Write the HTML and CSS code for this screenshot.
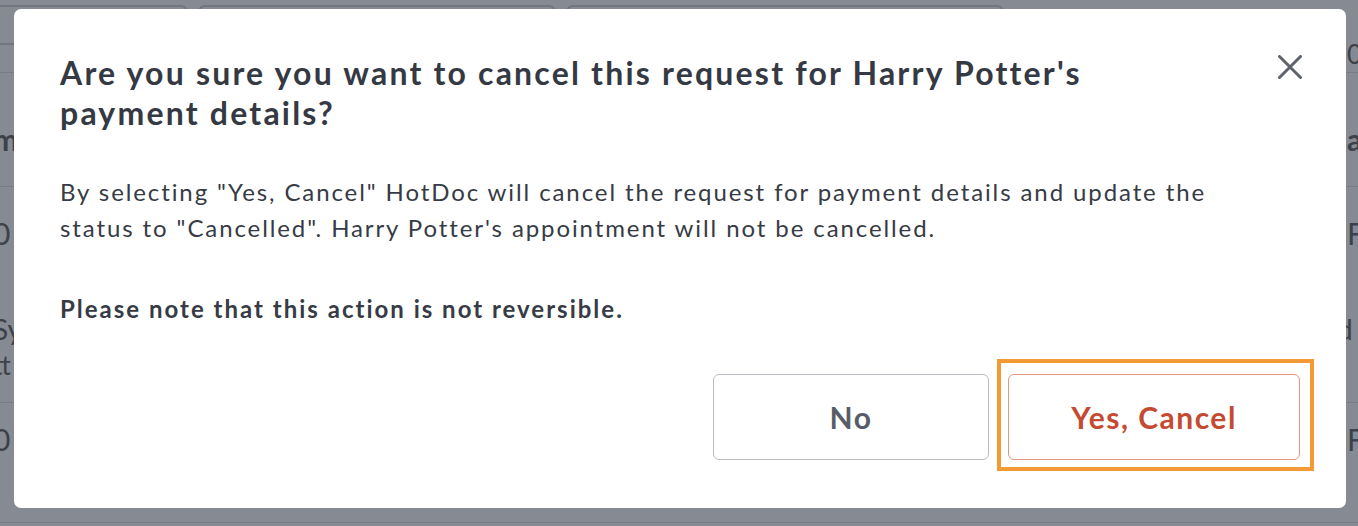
FILE: index.html
```html
<!DOCTYPE html>
<html lang="en">
<head>
<meta charset="utf-8">
<title>Cancel payment details request</title>
<link rel="stylesheet" href="styles.css">
</head>
<body>
<div class="page">
  <div class="filters">
    <div class="filter f1"></div>
    <div class="filter f2"></div>
    <div class="filter f3"></div>
    <span class="edge-r top-o">0</span>
  </div>
  <div class="row head">
    <span class="cell-l">m</span>
    <span class="cell-r">a</span>
  </div>
  <div class="row r1">
    <span class="cell-l">0</span>
    <span class="cell-r">F</span>
    <span class="cell-l sub">Sy</span>
    <span class="cell-r sub">d</span>
    <span class="cell-l small">tt</span>
  </div>
  <div class="row r2">
    <span class="cell-l">0</span>
    <span class="cell-r">F</span>
  </div>
</div>

<div class="modal" role="dialog" aria-modal="true">
  <div class="modal-head">
    <h2 class="modal-title">Are you sure you want to cancel this request for Harry Potter's payment details?</h2>
    <button class="close" aria-label="Close">
      <svg width="24" height="24" viewBox="0 0 24 24"><path d="M1.5 1.5 L22.5 22.5 M22.5 1.5 L1.5 22.5" stroke="#5d626c" stroke-width="3" stroke-linecap="round" fill="none"/></svg>
    </button>
  </div>
  <p class="modal-text">By selecting "Yes, Cancel" HotDoc will cancel the request for payment details and update the status to "Cancelled". Harry Potter's appointment will not be cancelled.</p>
  <p class="modal-note">Please note that this action is not reversible.</p>
  <div class="actions">
    <button class="btn btn-no">No</button>
    <button class="btn btn-yes">Yes, Cancel</button>
  </div>
</div>
</body>
</html>
```

FILE: styles.css
```css
* { box-sizing: border-box; }

html, body {
  margin: 0;
  padding: 0;
  height: 100%;
}

body {
  background: #868a92;
  font-family: Lato, "Noto Sans", sans-serif;
  color: #373c46;
  overflow: hidden;
}

.page {
  width: 1358px;
  height: 526px;
  position: relative;
  overflow: hidden;
}

.filters {
  height: 73px;
  display: flex;
  gap: 10px;
  padding-top: 5px;
  border-bottom: 1px solid #787c84;
  position: relative;
}

.filter {
  height: 40px;
  border: 2px solid #72767e;
  border-radius: 7px;
}
.f1 { width: 196px; margin-left: -8px; }
.f2 { width: 358px; }
.f3 { width: 438px; }

.row {
  display: grid;
  grid-template-columns: 1347px 1fr;
  border-bottom: 1px solid #787c84;
  color: #3d414a;
  font-size: 30px;
}
.head { height: 114px; padding-top: 48px; font-weight: 700; }
.r1 { height: 216px; padding-top: 28px; row-gap: 60px; }
.r2 { height: 120px; padding-top: 18px; }

.cell-l { margin-left: -7px; line-height: 36px; }
.cell-r { line-height: 36px; white-space: nowrap; }
.sub { font-size: 28px; }
.cell-r.sub { margin-left: -10px; }
.small { font-size: 26px; margin-top: -60px; grid-column: 1; }

.edge-r {
  position: absolute;
  left: 1347px;
  top: 38px;
  font-size: 26px;
  color: #3d414a;
}

/* Modal */
.modal {
  position: absolute;
  left: 14px;
  top: 9px;
  width: 1332px;
  height: 499px;
  background: #ffffff;
  border-radius: 7px;
  padding: 44px 46px 48px;
}

.modal-head {
  display: flex;
  justify-content: space-between;
  align-items: flex-start;
  gap: 40px;
}

.modal-title {
  margin: 0;
  max-width: 1100px;
  font-size: 32px;
  line-height: 40px;
  font-weight: 700;
  letter-spacing: 2.2px;
  color: #343943;
}

.close {
  margin: 2px -2px 0 0;
  padding: 0;
  border: 0;
  background: none;
  width: 24px;
  height: 24px;
  flex: none;
}
.close svg { display: block; }

.modal-text {
  margin: 41px 0 0;
  max-width: 1180px;
  font-size: 24px;
  line-height: 36px;
  letter-spacing: 1.9px;
  color: #363b45;
}

.modal-note {
  margin: 45px 0 0;
  font-size: 24px;
  line-height: 36px;
  font-weight: 700;
  letter-spacing: 2px;
  color: #363b45;
}

.actions {
  margin-top: 47px;
  display: flex;
  justify-content: flex-end;
  gap: 19px;
}

.btn {
  height: 86px;
  border-radius: 6px;
  background: #ffffff;
  font-family: Lato, "Noto Sans", sans-serif;
  font-size: 30px;
  font-weight: 700;
  letter-spacing: 1.5px;
  padding: 0;
}

.btn-no {
  width: 276px;
  border: 1px solid #b9bcc1;
  color: #575d68;
}

.btn-yes {
  width: 292px;
  border: 1px solid #e59583;
  color: #c54a32;
  position: relative;
}

.btn-yes::after {
  content: "";
  position: absolute;
  left: -12px;
  right: -15px;
  top: -16px;
  bottom: -12px;
  border: 4px solid #f39a36;
  pointer-events: none;
}
```
